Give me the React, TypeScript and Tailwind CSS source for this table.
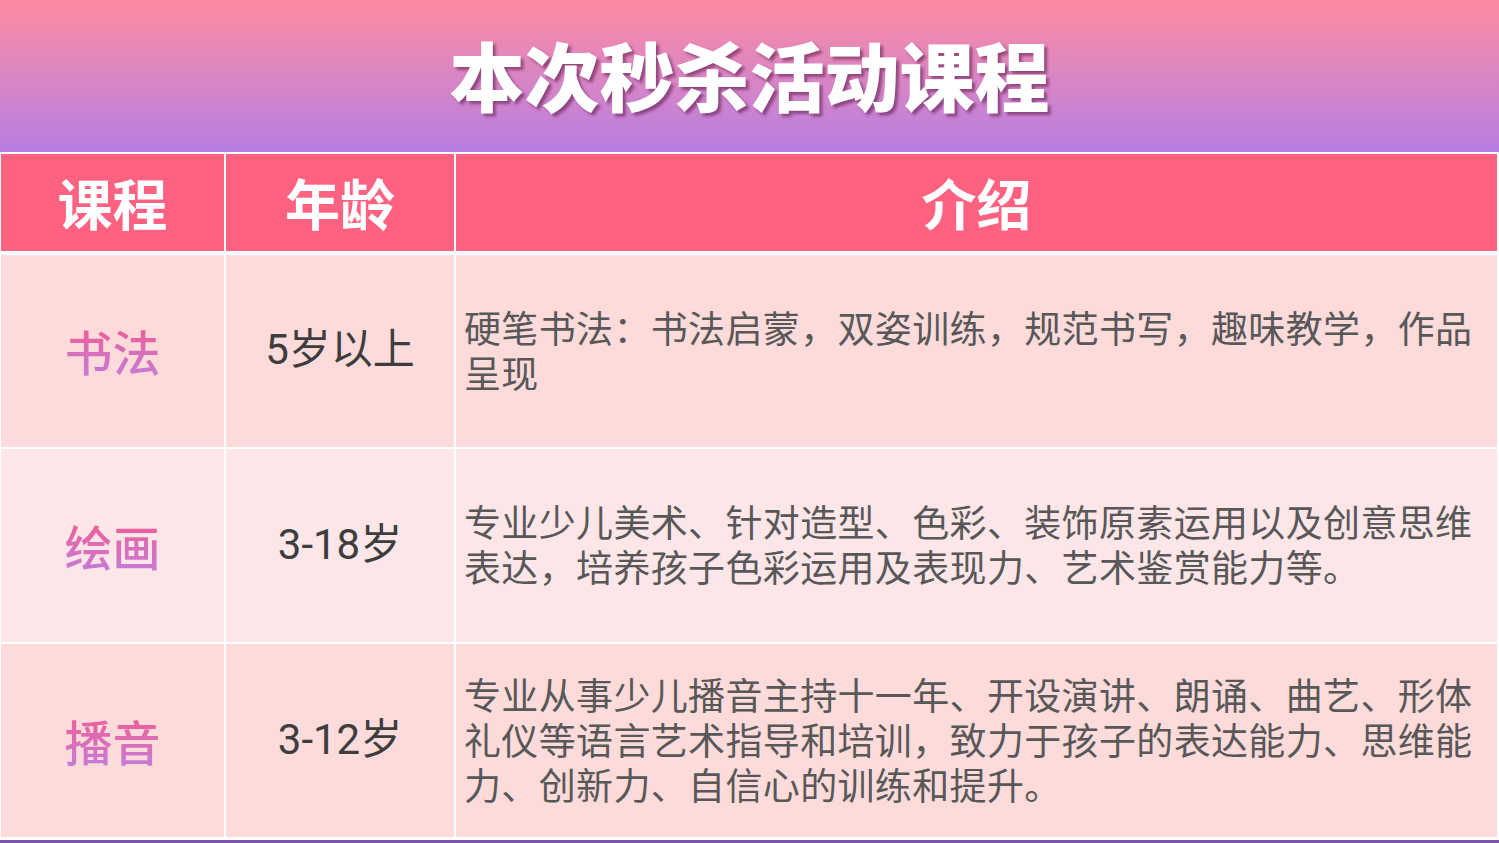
const rows = [
  {
    name: "书法",
    age: "5岁以上",
    intro: "硬笔书法：书法启蒙，双姿训练，规范书写，趣味教学，作品呈现",
    bg: "bg-[#fddbdb]",
  },
  {
    name: "绘画",
    age: "3-18岁",
    intro:
      "专业少儿美术、针对造型、色彩、装饰原素运用以及创意思维表达，培养孩子色彩运用及表现力、艺术鉴赏能力等。",
    bg: "bg-[#fde6e8]",
  },
  {
    name: "播音",
    age: "3-12岁",
    intro:
      "专业从事少儿播音主持十一年、开设演讲、朗诵、曲艺、形体礼仪等语言艺术指导和培训，致力于孩子的表达能力、思维能力、创新力、自信心的训练和提升。",
    bg: "bg-[#fddbdb]",
  },
];

const font = "font-['Noto_Sans_CJK_SC','Noto_Sans',sans-serif]";

export default function App() {
  return (
    <div
      className={`w-[1499px] h-[843px] overflow-hidden flex flex-col bg-[#7b55a8] ${font}`}
    >
      <div className="h-[152px] shrink-0 flex items-center justify-center bg-linear-to-b from-[#fe8aa0] to-[#b77de2]">
        <h1 className="text-white font-black text-[75px] leading-none pb-[6px] [text-shadow:3px_3px_3px_rgba(90,20,70,0.55)]">
          本次秒杀活动课程
        </h1>
      </div>

      <div className="bg-white pt-[2px] pb-[3px] pl-[1px] pr-[2px] flex flex-col gap-[2px]">
        <div className="grid grid-cols-[223px_228px_1041px] gap-x-[2px] h-[97px] mb-[2px]">
          {["课程", "年龄", "介绍"].map((h) => (
            <div
              key={h}
              className="bg-[#ff6180] flex items-center justify-center text-white font-bold text-[55px] leading-none pb-[2px]"
            >
              {h}
            </div>
          ))}
        </div>

        {rows.map((r, i) => (
          <div
            key={r.name}
            className={`grid grid-cols-[223px_228px_1041px] gap-x-[2px] ${
              i === 0 ? "h-[192px]" : "h-[193px]"
            }`}
          >
            <div className={`${r.bg} flex items-center justify-center`}>
              <span className="text-[48px] leading-none font-medium pb-[2px] bg-linear-to-b from-[#ef5b94] to-[#c57ad8] bg-clip-text text-transparent">
                {r.name}
              </span>
            </div>
            <div
              className={`${r.bg} flex items-center justify-center text-[42px] leading-none text-[#3d3d3d] font-['Roboto','Noto_Sans_CJK_SC',sans-serif] pb-[2px]`}
            >
              {r.age}
            </div>
            <div className={`${r.bg} flex items-center pl-[8px] pr-[6px] pb-[3px]`}>
              <p className="text-[37px] leading-[45px] tracking-[0.35px] text-[#585858]">
                {r.intro}
              </p>
            </div>
          </div>
        ))}
      </div>
    </div>
  );
}
